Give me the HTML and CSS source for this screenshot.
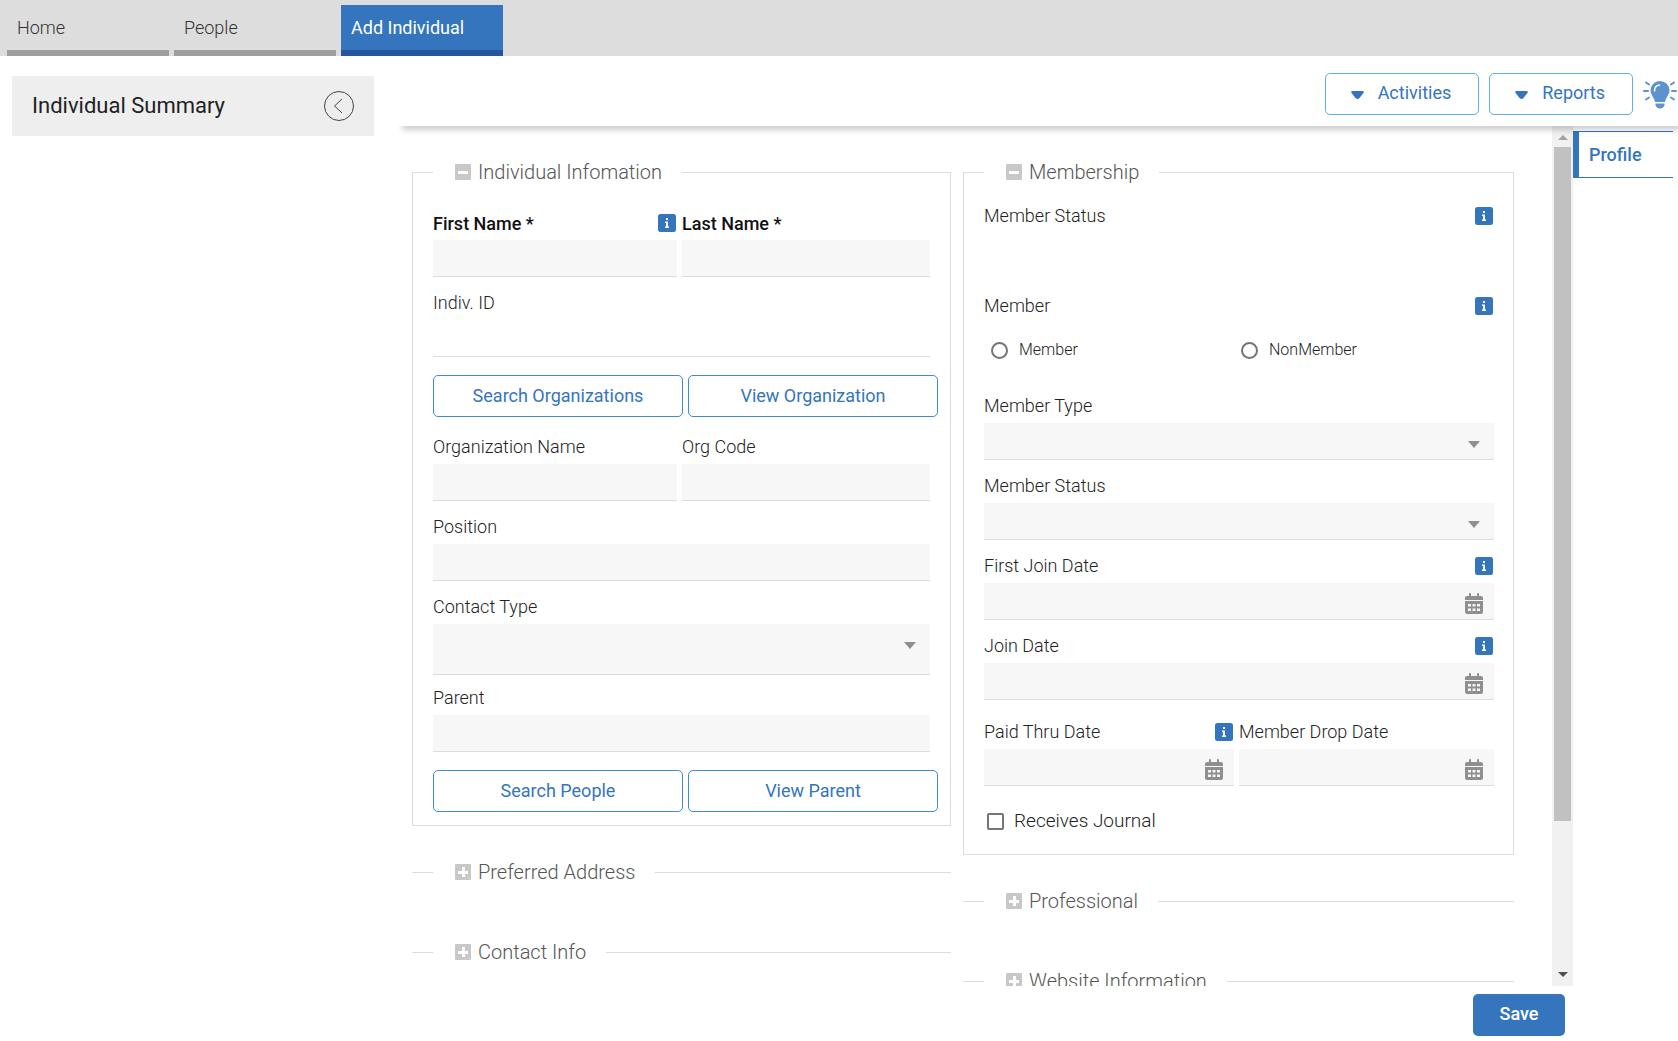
FILE: index.html
```html
<!DOCTYPE html>
<html lang="en">
<head>
    <meta charset="UTF-8">
    <meta name="viewport" content="width=device-width, initial-scale=1.0">
    <title>Add Individual</title>
    <link rel="stylesheet" href="styles.css">
</head>
<body>
    <!-- Shared icon shapes -->
    <svg class="sprite" aria-hidden="true">
        <symbol id="icon-info" viewBox="0 0 18 18">
            <rect width="18" height="18" rx="2.500" fill="#3475be"/>
            <path d="M8 4h2v2H8zM7 7.500h3v5h1V14H7v-1.500h1V9H7z" fill="#fff"/>
        </symbol>
        <symbol id="icon-minus" viewBox="0 0 16 16">
            <rect width="16" height="16" rx="1" fill="#c8c8c8"/>
            <path d="M3 7h10v3H3z" fill="#fff"/>
        </symbol>
        <symbol id="icon-plus" viewBox="0 0 16 16">
            <rect width="16" height="16" rx="1" fill="#c8c8c8"/>
            <path d="M3 7h4V3h3v4h3v3h-3v3H7v-3H3z" fill="#fff"/>
        </symbol>
        <symbol id="icon-caret" viewBox="0 0 12 7">
            <path d="M0 0h12L6 7z" fill="#8f8f8f"/>
        </symbol>
        <symbol id="icon-menu-caret" viewBox="0 0 13 8">
            <path d="M1.500 0h10q1.500 0 1.300 1.500L8.500 7Q6.500 9 4.500 7L.2 1.500Q0 0 1.500 0z" fill="#3475be"/>
        </symbol>
        <symbol id="icon-calendar" viewBox="0 0 18 21">
            <path fill="#8f8f8f" fill-rule="evenodd" d="M0 7V5q0-2 2-2h2V1q0-1 1-1t1 1v2h6V1q0-1 1-1t1 1v2h2q2 0 2 2v2zM0 8h18v11q0 2-2 2H2q-2 0-2-2zM3 11v2.500h3V11zM7.500 11v2.500h3V11zM12 11v2.500h3V11zM3 15.500V18h3v-2.500zM7.500 15.500V18h3v-2.500zM12 15.500V18h3v-2.500z"/>
        </symbol>
    </svg>

    <nav class="tabs">
        <a class="tab" href="#">Home</a>
        <a class="tab" href="#">People</a>
        <a class="tab active" href="#">Add Individual</a>
    </nav>

    <div class="layout">
        <aside class="summary">
            <div class="summary-header">
                <h1>Individual Summary</h1>
                <button class="collapse" type="button" aria-label="Collapse">
                    <svg width="30" height="30" viewBox="0 0 30 30" fill="none" stroke="#444">
                        <circle cx="15" cy="15" r="14.500"/>
                        <path d="M18 8l-7.500 7 7.500 7"/>
                    </svg>
                </button>
            </div>
        </aside>

        <main class="content">
            <div class="toolbar">
                <button class="btn btn-menu" type="button"><svg width="13" height="8"><use href="#icon-menu-caret"/></svg>Activities</button>
                <button class="btn btn-menu" type="button"><svg width="13" height="8"><use href="#icon-menu-caret"/></svg>Reports</button>
                <button class="tips" type="button" aria-label="Tips">
                    <svg width="34" height="28" viewBox="0 0 34 28">
                        <path d="M17 0a9.500 9.500 0 0 1 9.500 9.500c0 4-3.500 6.500-4.500 11.500h-10c-1-5-4.500-7.500-4.500-11.500A9.500 9.500 0 0 1 17 0zM12.500 22.500h9v2q-1.500 3-4.500 3t-4.500-3z" fill="#5b92d0"/>
                        <path d="M11.500 10q0-5.500 5-6" fill="none" stroke="#fff" stroke-width="1.500" stroke-linecap="round"/>
                        <path d="M1 10h4M29 10h4M3 1.500l3 2M31 1.500l-3 2M3 18.500l3-2M31 18.500l-3-2" fill="none" stroke="#5b92d0" stroke-width="2" stroke-linecap="round"/>
                    </svg>
                </button>
            </div>

            <div class="workspace">
                <form class="form" id="individual">
                    <div class="column">
                        <fieldset class="panel">
                            <legend><svg width="16" height="16"><use href="#icon-minus"/></svg>Individual Infomation</legend>
                            <div class="row">
                                <div class="field required">
                                    <div class="label-row">
                                        <label for="firstName">First Name *</label>
                                        <svg width="18" height="18"><use href="#icon-info"/></svg>
                                    </div>
                                    <input type="text" id="firstName">
                                </div>
                                <div class="field required">
                                    <div class="label-row"><label for="lastName">Last Name *</label></div>
                                    <input type="text" id="lastName">
                                </div>
                            </div>
                            <div class="field">
                                <div class="label-row"><label for="indivId">Indiv. ID</label></div>
                                <input type="text" id="indivId" class="plain" readonly>
                            </div>
                            <div class="btn-row">
                                <button class="btn" type="button">Search Organizations</button>
                                <button class="btn" type="button">View Organization</button>
                            </div>
                            <div class="row">
                                <div class="field">
                                    <div class="label-row"><label for="orgName">Organization Name</label></div>
                                    <input type="text" id="orgName">
                                </div>
                                <div class="field">
                                    <div class="label-row"><label for="orgCode">Org Code</label></div>
                                    <input type="text" id="orgCode">
                                </div>
                            </div>
                            <div class="field">
                                <div class="label-row"><label for="position">Position</label></div>
                                <input type="text" id="position">
                            </div>
                            <div class="field tall">
                                <div class="label-row"><label for="contactType">Contact Type</label></div>
                                <div class="control">
                                    <select id="contactType"><option></option></select>
                                    <svg class="caret" width="12" height="7"><use href="#icon-caret"/></svg>
                                </div>
                            </div>
                            <div class="field">
                                <div class="label-row"><label for="parent">Parent</label></div>
                                <input type="text" id="parent">
                            </div>
                            <div class="btn-row">
                                <button class="btn" type="button">Search People</button>
                                <button class="btn" type="button">View Parent</button>
                            </div>
                        </fieldset>
                        <fieldset class="panel collapsed">
                            <legend><svg width="16" height="16"><use href="#icon-plus"/></svg>Preferred Address</legend>
                        </fieldset>
                        <fieldset class="panel collapsed">
                            <legend><svg width="16" height="16"><use href="#icon-plus"/></svg>Contact Info</legend>
                        </fieldset>
                    </div>

                    <div class="column">
                        <fieldset class="panel membership">
                            <legend><svg width="16" height="16"><use href="#icon-minus"/></svg>Membership</legend>
                            <div class="field status">
                                <div class="label-row">
                                    <span>Member Status</span>
                                    <svg width="18" height="18"><use href="#icon-info"/></svg>
                                </div>
                            </div>
                            <div class="field">
                                <div class="label-row">
                                    <span id="memberLabel">Member</span>
                                    <svg width="18" height="18"><use href="#icon-info"/></svg>
                                </div>
                                <div class="radios" role="radiogroup" aria-labelledby="memberLabel">
                                    <label><input type="radio" name="member">Member</label>
                                    <label><input type="radio" name="member">NonMember</label>
                                </div>
                            </div>
                            <div class="field">
                                <div class="label-row"><label for="memberType">Member Type</label></div>
                                <div class="control">
                                    <select id="memberType"><option></option></select>
                                    <svg class="caret" width="12" height="7"><use href="#icon-caret"/></svg>
                                </div>
                            </div>
                            <div class="field">
                                <div class="label-row"><label for="memberStatus">Member Status</label></div>
                                <div class="control">
                                    <select id="memberStatus"><option></option></select>
                                    <svg class="caret" width="12" height="7"><use href="#icon-caret"/></svg>
                                </div>
                            </div>
                            <div class="field">
                                <div class="label-row">
                                    <label for="firstJoin">First Join Date</label>
                                    <svg width="18" height="18"><use href="#icon-info"/></svg>
                                </div>
                                <div class="control">
                                    <input type="text" id="firstJoin">
                                    <svg class="calendar" width="18" height="21"><use href="#icon-calendar"/></svg>
                                </div>
                            </div>
                            <div class="field">
                                <div class="label-row">
                                    <label for="joinDate">Join Date</label>
                                    <svg width="18" height="18"><use href="#icon-info"/></svg>
                                </div>
                                <div class="control">
                                    <input type="text" id="joinDate">
                                    <svg class="calendar" width="18" height="21"><use href="#icon-calendar"/></svg>
                                </div>
                            </div>
                            <div class="row dates">
                                <div class="field">
                                    <div class="label-row">
                                        <label for="paidThru">Paid Thru Date</label>
                                        <svg width="18" height="18"><use href="#icon-info"/></svg>
                                    </div>
                                    <div class="control">
                                        <input type="text" id="paidThru">
                                        <svg class="calendar" width="18" height="21"><use href="#icon-calendar"/></svg>
                                    </div>
                                </div>
                                <div class="field">
                                    <div class="label-row"><label for="dropDate">Member Drop Date</label></div>
                                    <div class="control">
                                        <input type="text" id="dropDate">
                                        <svg class="calendar" width="18" height="21"><use href="#icon-calendar"/></svg>
                                    </div>
                                </div>
                            </div>
                            <label class="check"><input type="checkbox">Receives Journal</label>
                        </fieldset>
                        <fieldset class="panel collapsed">
                            <legend><svg width="16" height="16"><use href="#icon-plus"/></svg>Professional</legend>
                        </fieldset>
                        <fieldset class="panel collapsed">
                            <legend><svg width="16" height="16"><use href="#icon-plus"/></svg>Website Information</legend>
                        </fieldset>
                    </div>
                </form>

                <div class="scrollbar" aria-hidden="true">
                    <svg width="10" height="5" viewBox="0 0 10 5"><path d="M0 5l5-5 5 5z" fill="#a3a3a3"/></svg>
                    <div class="track"><div class="thumb"></div></div>
                    <svg width="10" height="5" viewBox="0 0 10 5"><path d="M0 0h10L5 5z" fill="#505050"/></svg>
                </div>

                <nav class="side-nav">
                    <a href="#" class="side-tab">Profile</a>
                </nav>
            </div>

            <div class="actions">
                <button class="btn btn-save" type="submit" form="individual">Save</button>
            </div>
        </main>
    </div>
</body>
</html>
```
FILE: styles.css
```css
* {
    margin: 0;
    padding: 0;
    box-sizing: border-box;
}

:root {
    --blue: #3475be;
    --blue-dark: #28559e;
    --line: #dcdcdc;
    --field: #f7f7f7;
    --text: #222;
}

body {
    font-family: Roboto, 'Liberation Sans', sans-serif;
    font-size: 18px;
    font-weight: 300;
    line-height: 24px;
    color: var(--text);
    background: #fff;
    height: 100vh;
    display: flex;
    flex-direction: column;
    overflow: hidden;
}

button,
input,
select {
    font: inherit;
    color: inherit;
}

button {
    cursor: pointer;
}

svg {
    display: block;
    flex: none;
}

.sprite {
    position: absolute;
    width: 0;
    height: 0;
}

/* Top tabs */
.tabs {
    display: flex;
    gap: 5px;
    padding: 5px 7px 0;
    background: #ddd;
}

.tab {
    width: 162px;
    height: 51px;
    padding: 11px 10px;
    border-bottom: 6px solid #9e9e9e;
    color: #333;
    text-decoration: none;
}

.tab.active {
    background: var(--blue);
    border-color: var(--blue-dark);
    color: #fff;
    font-weight: 400;
}

.layout {
    flex: 1;
    display: flex;
    min-height: 0;
}

/* Summary panel */
.summary {
    width: 399px;
    padding: 20px 25px 0 12px;
}

.summary-header {
    display: flex;
    align-items: center;
    justify-content: space-between;
    height: 60px;
    padding: 0 20px;
    background: #eee;
}

.summary-header h1 {
    font-size: 22px;
    font-weight: 400;
    line-height: 26px;
}

.collapse,
.tips {
    border: none;
    background: none;
}

.tips {
    padding-top: 2px;
}

.content {
    flex: 1;
    min-width: 0;
    display: flex;
    flex-direction: column;
}

/* Toolbar */
.toolbar {
    position: relative;
    z-index: 1;
    display: flex;
    align-items: center;
    justify-content: flex-end;
    gap: 10px;
    height: 70px;
    padding: 6px 1px 0 0;
    background: #fff;
    box-shadow: 3px 4px 6px rgba(0, 0, 0, 0.2);
    clip-path: inset(0 0 -12px 0);
}

.btn {
    height: 42px;
    padding-bottom: 1px;
    border: 1px solid #3d8bd4;
    border-radius: 5px;
    background: #fff;
    color: var(--blue);
    font-weight: 400;
}

.btn-menu {
    display: flex;
    align-items: center;
    gap: 14px;
    padding: 0 27px 2px 25px;
    border-color: #5fb2e6;
}

.btn-menu svg {
    margin-top: 4px;
}

/* Form area */
.workspace {
    flex: 1;
    display: flex;
    min-height: 0;
}

.form {
    flex: 1;
    display: grid;
    grid-template-columns: 539fr 551fr;
    gap: 12px;
    padding: 34px 38px 0 13px;
    overflow-y: auto;
    scrollbar-width: none;
}

.panel {
    min-width: 0;
    margin-bottom: 34px;
    padding: 27px 12px 13px 20px;
    border: 1px solid var(--line);
}

.panel legend {
    display: flex;
    align-items: center;
    gap: 7px;
    height: 25px;
    padding: 0 20px 2px 22px;
    font-size: 20px;
    color: #555;
}

.membership {
    padding: 20px 19px 13px 20px;
}

.collapsed {
    margin-bottom: 55px;
    padding: 0 20px;
    border-width: 1px 0 0;
    border-left: 1px solid transparent;
}

.field {
    margin-bottom: 15px;
    padding-right: 8px;
}

.membership .field,
.row .field {
    padding-right: 0;
}

.row {
    display: grid;
    grid-template-columns: 244fr 248fr;
    gap: 5px;
    padding-right: 8px;
}

.dates {
    grid-template-columns: 250fr 255fr;
    padding: 6px 0 0;
}

.label-row {
    display: flex;
    align-items: center;
    justify-content: space-between;
    height: 22px;
    margin-bottom: 6px;
    padding-right: 1px;
}

.required {
    font-weight: 500;
    color: #111;
}

.required label {
    padding-top: 2px;
}

.field input[type="text"],
.field select {
    display: block;
    width: 100%;
    height: 37px;
    padding: 0 10px;
    border: none;
    border-bottom: 1px solid var(--line);
    border-radius: 0;
    background: var(--field);
    appearance: none;
}

.field input.plain {
    background: none;
}

.tall {
    margin-bottom: 12px;
}

.tall select {
    height: 51px;
}

.control {
    position: relative;
}

.caret,
.calendar {
    position: absolute;
    top: 18px;
    right: 14px;
    pointer-events: none;
}

.calendar {
    top: 10px;
    right: 11px;
}

.btn-row {
    display: grid;
    grid-template-columns: 1fr 1fr;
    gap: 5px;
    padding: 3px 0 19px;
}

.btn-row:last-child {
    padding-bottom: 0;
}

.status {
    height: 75px;
}

.radios {
    display: grid;
    grid-template-columns: 250px 1fr;
    align-items: center;
    height: 57px;
    padding: 0 0 3px 7px;
    font-size: 16px;
}

.radios label,
.check {
    display: flex;
    align-items: center;
    gap: 11px;
}

input[type="radio"],
input[type="checkbox"] {
    width: 17px;
    height: 17px;
    border: 2px solid #757575;
    border-radius: 2px;
    background: #fff;
    appearance: none;
}

input[type="radio"] {
    border-radius: 50%;
}

input[type="radio"]:checked,
input[type="checkbox"]:checked {
    background: var(--blue);
}

.check {
    gap: 10px;
    height: 40px;
    padding-left: 3px;
    font-size: 19px;
}

/* Scrollbar */
.scrollbar {
    width: 21px;
    display: flex;
    flex-direction: column;
    align-items: center;
    gap: 7px;
    padding: 9px 2px;
    background: #f1f1f1;
}

.track {
    flex: 1;
    width: 100%;
    display: grid;
    grid-template-rows: 14fr 3fr;
}

.thumb {
    background: #c1c1c1;
}

/* Right side tabs */
.side-nav {
    width: 105px;
    padding: 5px 5px 0 0;
}

.side-tab {
    display: flex;
    align-items: center;
    height: 47px;
    padding-left: 10px;
    border: 1px solid var(--blue);
    border-width: 1px 0 1px 6px;
    color: var(--blue);
    font-weight: 500;
    text-decoration: none;
}

.actions {
    display: flex;
    justify-content: flex-end;
    height: 55px;
    padding: 8px 113px 0 0;
}

.btn-save {
    width: 92px;
    padding-bottom: 2px;
    border: none;
    background: var(--blue);
    color: #fff;
    font-weight: 500;
}
```
